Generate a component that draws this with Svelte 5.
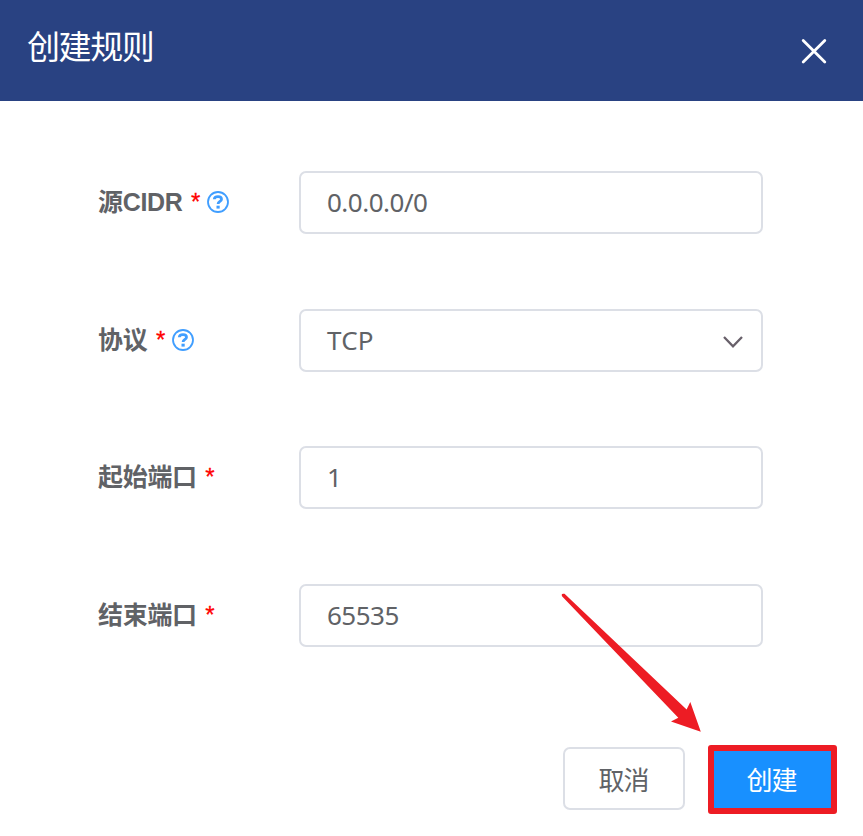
<script>
  const fields = [
    { id: 'cidr', label: '源CIDR', value: '0.0.0.0/0', help: true },
    { id: 'protocol', label: '协议', value: 'TCP', help: true, select: true },
    { id: 'start', label: '起始端口', value: '1' },
    { id: 'end', label: '结束端口', value: '65535' }
  ];
</script>

<div class="dialog">
  <header>
    <h1>创建规则</h1>
    <svg class="close" width="26" height="26" viewBox="0 0 26 26" aria-label="关闭">
      <path d="M2.2 2.4 23.8 24M23.8 2.4 2.2 24" fill="none" stroke="#fff" stroke-width="2.8" stroke-linecap="round" />
    </svg>
  </header>

  <main>
    {#each fields as field (field.id)}
      <div class="row">
        <div class="label">
          <span class="name">{field.label}</span>
          <span class="star">*</span>
          {#if field.help}
            <svg class="help" width="22" height="22" viewBox="0 0 22 22">
              <circle cx="11" cy="11" r="10" fill="none" stroke="#409eff" stroke-width="1.8" />
              <path d="M7.3 8.3C7.4 6.3 9 5.6 11 5.6s3.5 1 3.5 2.7c0 2.2-3.4 2.2-3.4 4.8" fill="none" stroke="#409eff" stroke-width="2.8" />
              <rect x="9.5" y="14.7" width="3.2" height="2.9" fill="#409eff" />
            </svg>
          {/if}
        </div>
        <div class="control" class:select={field.select}>
          <span>{field.value}</span>
          {#if field.select}
            <svg class="chevron" width="20" height="12" viewBox="0 0 20 12">
              <path d="M1 1 10 10.3 19 1" fill="none" stroke="#68606a" stroke-width="2.3" />
            </svg>
          {/if}
        </div>
      </div>
    {/each}
  </main>

  <footer>
    <button class="cancel">取消</button>
    <button class="create">创建</button>
  </footer>

  <svg class="arrow" width="140" height="140" viewBox="561 593 140 140">
    <path d="M564.5 593.8 686.6 709.6 690.3 702 700.8 731.7 671 721.6 678.3 717.8 562 596.2Q560.8 593 564.5 593.8Z" fill="#ed1c24" />
  </svg>
</div>

<style>
  :global(body) {
    margin: 0;
    background: #fff;
  }
  .dialog {
    position: relative;
    box-sizing: border-box;
    width: 863px;
    height: 836px;
    overflow: hidden;
    background: #fff;
    color: #606266;
    font-family: 'Noto Sans', 'Noto Sans CJK SC', sans-serif;
  }
  header {
    display: flex;
    justify-content: space-between;
    align-items: flex-start;
    box-sizing: border-box;
    height: 101px;
    padding: 22px 36px 0 27px;
    background: #294282;
    color: #fff;
  }
  h1 {
    margin: 0;
    font: 400 33px/46px 'Noto Sans CJK SC', sans-serif;
    letter-spacing: -1.4px;
  }
  .close {
    margin-top: 16px;
  }
  main {
    display: flex;
    flex-direction: column;
    gap: 74.67px;
    padding: 70px 100px 0 98px;
  }
  .row {
    display: flex;
    align-items: center;
    height: 63px;
  }
  .label {
    display: flex;
    align-items: center;
    box-sizing: border-box;
    width: 201px;
    height: 63px;
    padding-bottom: 1px;
    font: 700 25px/36px 'Liberation Sans', 'Noto Sans CJK SC', sans-serif;
    letter-spacing: -0.3px;
  }
  .star {
    margin-left: 8.5px;
    color: #f00;
    font-weight: 400;
    font-size: 24px;
    -webkit-text-stroke: 0.3px #f00;
  }
  .help {
    margin-left: 7px;
  }
  .control {
    display: flex;
    flex: 1;
    justify-content: space-between;
    align-items: center;
    box-sizing: border-box;
    height: 63px;
    padding: 0 18px 1px 26px;
    border: 2px solid #dcdfe6;
    border-radius: 7px;
    font-size: 26px;
    line-height: 36px;
    letter-spacing: -0.5px;
  }
  .select {
    letter-spacing: 0.2px;
  }
  .chevron {
    margin-top: 4px;
  }
  footer {
    display: flex;
    justify-content: flex-end;
    align-items: flex-start;
    gap: 23px;
    height: 69px;
    margin-top: 98px;
    padding-right: 26px;
  }
  button {
    box-sizing: border-box;
    margin: 0;
    font: 400 26px/36px 'Noto Sans CJK SC', sans-serif;
    letter-spacing: -1px;
  }
  .cancel {
    width: 122px;
    height: 63px;
    margin-top: 2px;
    padding: 2px 1px 0 0;
    border: 2px solid #dcdfe6;
    border-radius: 7px;
    background: #fff;
    color: #606266;
  }
  .create {
    width: 129px;
    height: 69px;
    padding: 0 2px 0 0;
    border: 6px solid #ed1c24;
    border-radius: 3px;
    background: #1890ff;
    color: #fff;
  }
  .arrow {
    position: absolute;
    left: 561px;
    top: 593px;
  }
</style>
